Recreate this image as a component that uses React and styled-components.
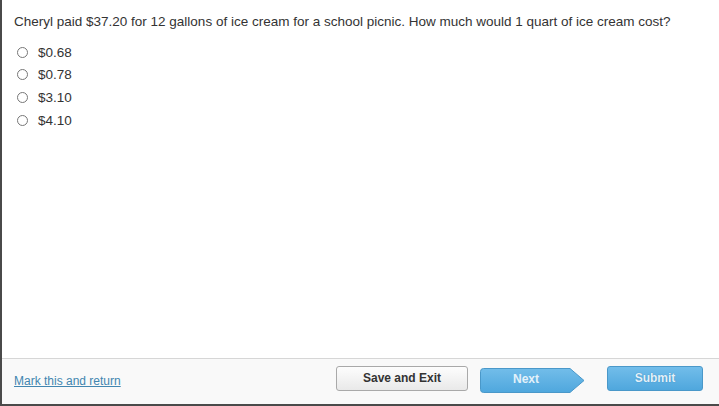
import React, { useState } from "react";
import styled, { createGlobalStyle } from "styled-components";

const Global = createGlobalStyle`
  html, body { margin: 0; padding: 0; background: #fff; }
  body { font-family: "Liberation Sans", Arial, sans-serif; }
`;

const Frame = styled.div`
  width: 719px;
  height: 406px;
  box-sizing: border-box;
  border-left: 2px solid #4a4a4a;
  border-bottom: 2px solid #4a4a4a;
  display: flex;
  flex-direction: column;
`;

const Body = styled.div`
  flex: 1;
  padding: 14px 0 0 12px;
`;

const Question = styled.p`
  margin: 0 0 11px;
  font-size: 13.5px;
  line-height: 16px;
  color: #333;
`;

const Options = styled.div`
  display: flex;
  flex-direction: column;
`;

const Option = styled.label`
  display: flex;
  align-items: center;
  height: 22.6px;
  font-size: 13.5px;
  color: #333;
  cursor: pointer;
`;

const Radio = styled.span`
  width: 9px;
  height: 9px;
  border: 1px solid #777;
  border-radius: 50%;
  margin: 0 10px 0 3px;
  background: #fff;
  box-sizing: content-box;
  display: flex;
  align-items: center;
  justify-content: center;
  &::after {
    content: "";
    width: 5px;
    height: 5px;
    border-radius: 50%;
    background: ${(p) => (p.$checked ? "#333" : "transparent")};
  }
`;

const Footer = styled.div`
  height: 46px;
  box-sizing: border-box;
  flex-shrink: 0;
  border-top: 1px solid #d6d6d6;
  background: #f9f9f9;
  display: flex;
  align-items: flex-start;
  padding: 7px 16px 0 12px;
`;

const MarkLink = styled.a`
  font-size: 12px;
  color: #4286b0;
  text-decoration: underline;
  margin-right: auto;
  margin-top: 8px;
`;

const Button = styled.button`
  font-family: "Liberation Sans", Arial, sans-serif;
  font-size: 12px;
  font-weight: bold;
  height: 25px;
  border-radius: 3px;
  cursor: pointer;
  padding: 0 0 2px;
`;

const GrayButton = styled(Button)`
  width: 132px;
  color: #333;
  border: 1px solid #a9a9a9;
  background: linear-gradient(#fdfdfd, #e9e9e9);
  margin-right: 12px;
`;

const BlueButton = styled(Button)`
  width: ${(p) => p.$w}px;
  color: #e3f1fa;
  border: 1px solid #4a98c9;
  background: linear-gradient(#72bdea, #4fa7dd);
  text-shadow: 0 0 1px #2f7cb0;
`;

const NextWrap = styled.div`
  width: 105px;
  height: 25px;
  margin: 2px 22px 0 0;
  cursor: pointer;
  svg { display: block; }
`;

export default function App() {
  const [choice, setChoice] = useState(null);
  const opts = ["$0.68", "$0.78", "$3.10", "$4.10"];
  return (
    <>
      <Global />
      <Frame>
        <Body>
          <Question>
            Cheryl paid $37.20 for 12 gallons of ice cream for a school picnic. How much would 1 quart of ice cream cost?
          </Question>
          <Options>
            {opts.map((o, i) => (
              <Option key={o} onClick={() => setChoice(i)}>
                <Radio $checked={choice === i} />
                {o}
              </Option>
            ))}
          </Options>
        </Body>
        <Footer>
          <MarkLink href="#">Mark this and return</MarkLink>
          <GrayButton>Save and Exit</GrayButton>
          <NextWrap>
            <svg width="105" height="25" viewBox="0 0 105 25">
              <defs>
                <linearGradient id="ng" x1="0" y1="0" x2="0" y2="1">
                  <stop offset="0" stopColor="#72bdea" />
                  <stop offset="1" stopColor="#4fa7dd" />
                </linearGradient>
              </defs>
              <path
                d="M3.5 0.5 H90 L104 12.5 L90 24.5 H3.5 Q0.5 24.5 0.5 21.5 V3.5 Q0.5 0.5 3.5 0.5 Z"
                fill="url(#ng)"
                stroke="#4a98c9"
              />
              <text
                x="46"
                y="15"
                textAnchor="middle"
                fontFamily="Liberation Sans, Arial, sans-serif"
                fontSize="12"
                fontWeight="bold"
                fill="#e3f1fa"
              >
                Next
              </text>
            </svg>
          </NextWrap>
          <BlueButton $w={96}>Submit</BlueButton>
        </Footer>
      </Frame>
    </>
  );
}
